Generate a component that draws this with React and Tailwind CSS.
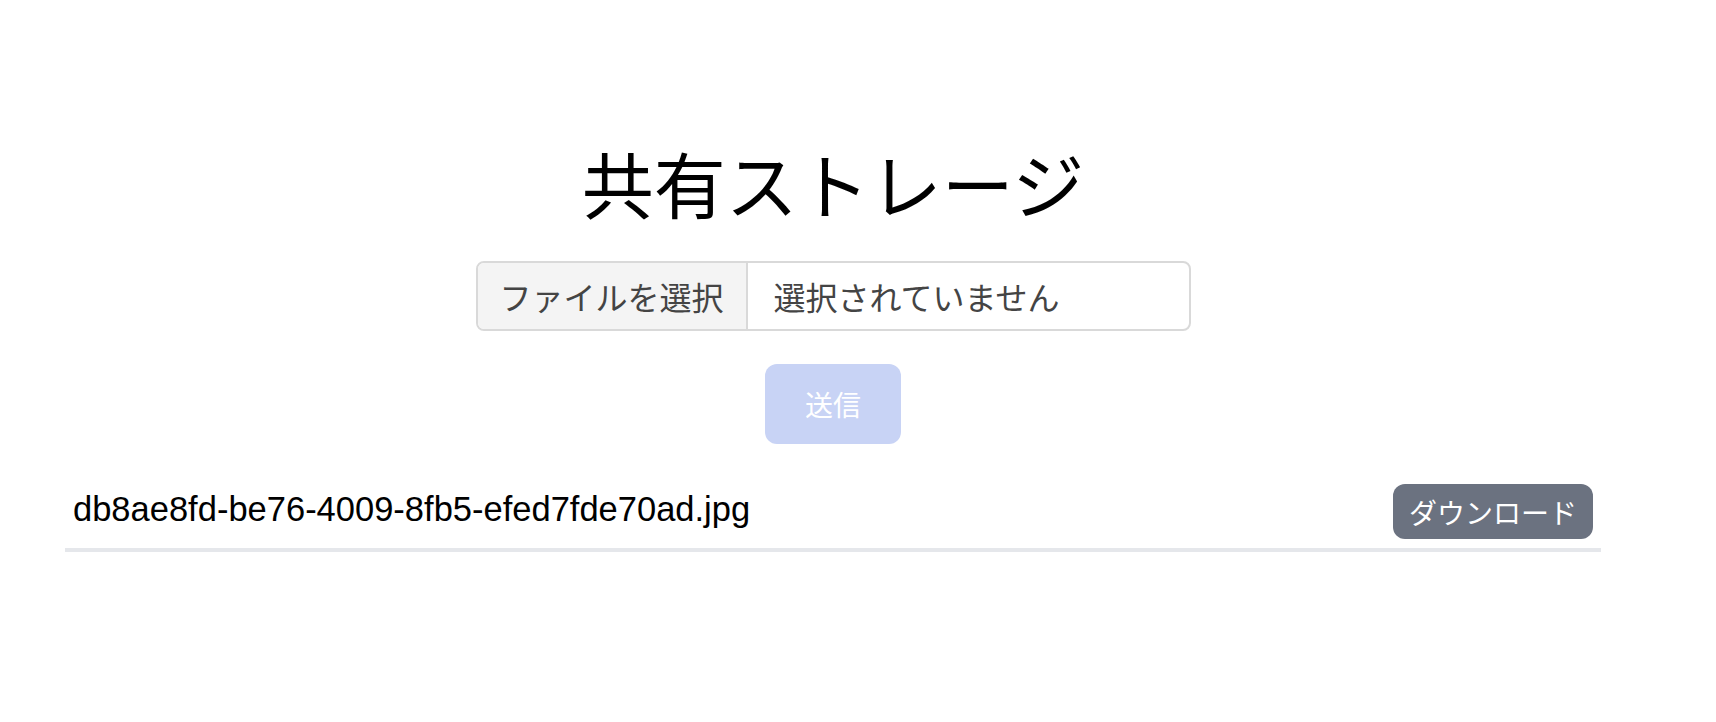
import React from "react";

const jp = { fontFamily: '"Noto Sans CJK JP", sans-serif' };

function FilePicker() {
  return (
    <div className="flex h-[70px] w-[715px] overflow-hidden rounded-lg border-2 border-[#d9d9d9] text-[32px] text-[#444]">
      <div className="flex items-center border-r-2 border-[#d9d9d9] bg-[#f4f4f4] px-[22px]">
        ファイルを選択
      </div>
      <div className="flex items-center pl-[26px]">選択されていません</div>
    </div>
  );
}

function FileRow({ name }) {
  return (
    <div className="flex items-center justify-between border-b-4 border-[#e5e7eb] px-2 pb-[9px]">
      <span
        className="-mt-1 text-[34.5px] text-black"
        style={{ fontFamily: '"Liberation Sans", "Noto Sans CJK JP", sans-serif' }}
      >
        {name}
      </span>
      <button className="h-[55px] rounded-xl bg-[#6b7280] px-4 text-[28px] leading-none text-white">
        ダウンロード
      </button>
    </div>
  );
}

export default function App() {
  return (
    <div className="min-h-screen bg-white" style={jp}>
      <div className="ml-[65px] w-[1536px]">
        <div className="flex flex-col items-center">
          <h1 className="mt-[139px] text-[72px] font-normal leading-[86px] text-black">
            共有ストレージ
          </h1>
          <div className="mt-[36px]">
            <FilePicker />
          </div>
          <button className="mt-[33px] h-[80px] w-[136px] rounded-xl bg-[#c8d3f5] text-[28px] text-white">
            送信
          </button>
        </div>
        <div className="mt-[40px]">
          <FileRow name="db8ae8fd-be76-4009-8fb5-efed7fde70ad.jpg" />
        </div>
      </div>
    </div>
  );
}
